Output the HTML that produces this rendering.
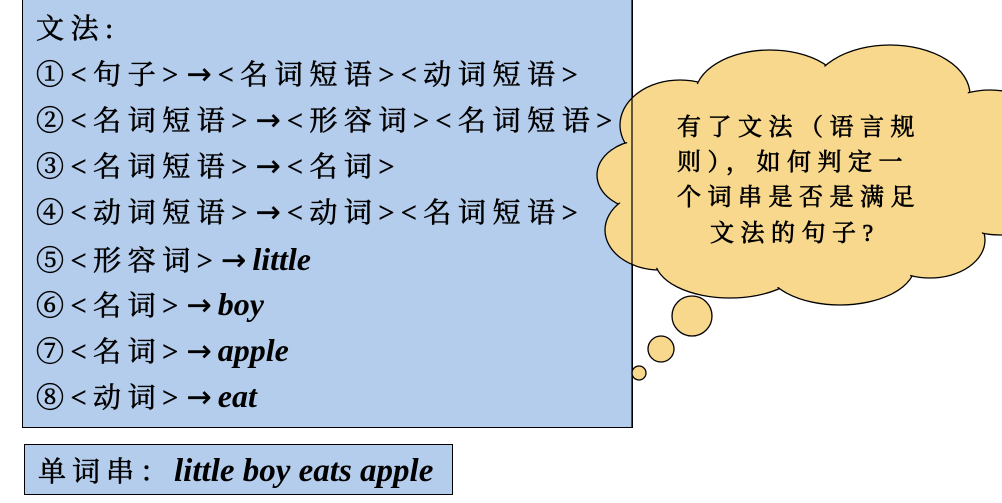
<!DOCTYPE html>
<html><head><meta charset="utf-8"><style>
body{margin:0;width:1002px;height:503px;background:#fff;position:relative;overflow:hidden;font-family:"Liberation Serif","Noto Serif CJK SC",serif;color:#000}
#box{position:absolute;left:22px;top:-2px;width:609px;height:428px;background:#b4cdec;border:1px solid #000}
.l{position:absolute;left:36px;font-size:28px;white-space:nowrap;line-height:32px;letter-spacing:6.6px;-webkit-text-stroke:0.6px #000}
.l i{font-size:32px;letter-spacing:0;font-weight:bold;-webkit-text-stroke:0}
.a{font-family:"DejaVu Sans",sans-serif;font-size:30px;letter-spacing:0;margin:0 6px 0 2px;-webkit-text-stroke:0.3px #000}
#bot{position:absolute;left:24px;top:444px;width:427px;height:49px;background:#b4cdec;border:1px solid #000}
svg{position:absolute;left:0;top:0}
.c{position:absolute;font-size:24px;white-space:nowrap;line-height:30px;letter-spacing:6.5px;-webkit-text-stroke:0.7px #000}
</style></head><body>
<div id="box"></div>
<div class="l" style="top:14px">文法:</div>
<div class="l" style="top:59px">①&lt;句子&gt;<span class="a">→</span>&lt;名词短语&gt;&lt;动词短语&gt;</div>
<div class="l" style="top:105px">②&lt;名词短语&gt;<span class="a">→</span>&lt;形容词&gt;&lt;名词短语&gt;</div>
<div class="l" style="top:151px">③&lt;名词短语&gt;<span class="a">→</span>&lt;名词&gt;</div>
<div class="l" style="top:197px">④&lt;动词短语&gt;<span class="a">→</span>&lt;动词&gt;&lt;名词短语&gt;</div>
<div class="l" style="top:243px">⑤&lt;形容词&gt;<span class="a">→</span><i>little</i></div>
<div class="l" style="top:288px">⑥&lt;名词&gt;<span class="a">→</span><i>boy</i></div>
<div class="l" style="top:334px">⑦&lt;名词&gt;<span class="a">→</span><i>apple</i></div>
<div class="l" style="top:380px">⑧&lt;动词&gt;<span class="a">→</span><i>eat</i></div>
<svg width="1002" height="503">
<g fill="#f8d88c" stroke="#000" stroke-width="1.3">
<ellipse cx="680" cy="125" rx="60" ry="45"/>
<ellipse cx="770" cy="95" rx="75" ry="45"/>
<ellipse cx="890" cy="95" rx="80" ry="50"/>
<ellipse cx="990" cy="130" rx="60" ry="40"/>
<ellipse cx="645" cy="175" rx="48" ry="35"/>
<ellipse cx="660" cy="230" rx="55" ry="40"/>
<ellipse cx="730" cy="260" rx="75" ry="38"/>
<ellipse cx="840" cy="265" rx="75" ry="40"/>
<ellipse cx="930" cy="240" rx="55" ry="38"/>
<ellipse cx="1000" cy="205" rx="50" ry="30"/>
<circle cx="692" cy="316" r="20"/>
<circle cx="661" cy="349" r="13"/>
<circle cx="639" cy="373" r="7"/>
</g>
<g fill="#f8d88c">
<ellipse cx="680" cy="125" rx="58" ry="43"/>
<ellipse cx="770" cy="95" rx="73" ry="43"/>
<ellipse cx="890" cy="95" rx="78" ry="48"/>
<ellipse cx="990" cy="130" rx="58" ry="38"/>
<ellipse cx="645" cy="175" rx="46" ry="33"/>
<ellipse cx="660" cy="230" rx="53" ry="38"/>
<ellipse cx="730" cy="260" rx="73" ry="36"/>
<ellipse cx="840" cy="265" rx="73" ry="38"/>
<ellipse cx="930" cy="240" rx="53" ry="36"/>
<ellipse cx="1000" cy="205" rx="48" ry="28"/>
<rect x="660" y="110" width="342" height="95"/>
<rect x="660" y="200" width="300" height="60"/>
</g>
<line x1="632" y1="0" x2="632" y2="427" stroke="#000" stroke-width="1.2"/>
</svg>
<div class="c" style="left:677px;top:113px">有了文法（语言规</div>
<div class="c" style="left:677px;top:148px">则），如何判定一</div>
<div class="c" style="left:677px;top:183px">个词串是否是满足</div>
<div class="c" style="left:710px;top:219px">文法的句子?</div>
<div id="bot"></div>
<div class="l" style="top:455px;left:38px;letter-spacing:6px">单词串：<i style="font-size:33px">little boy eats apple</i></div>
</body></html>
